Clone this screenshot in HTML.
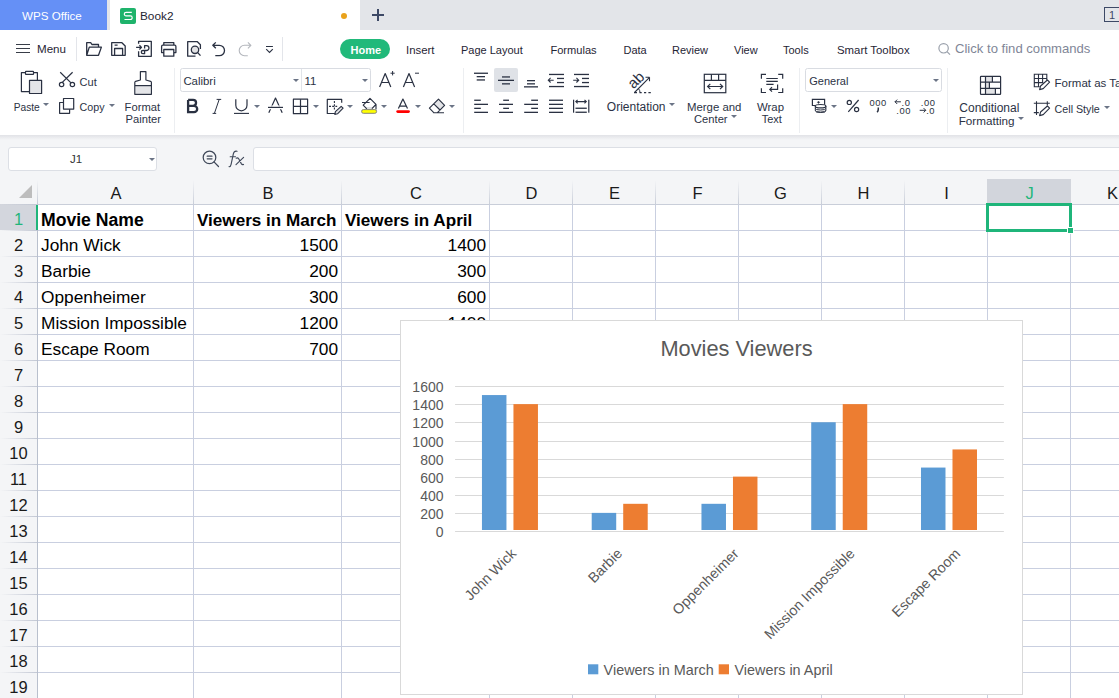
<!DOCTYPE html>
<html><head><meta charset="utf-8">
<style>
*{margin:0;padding:0;box-sizing:border-box}
html,body{width:1119px;height:698px;overflow:hidden;background:#fff;font-family:"Liberation Sans",sans-serif;position:relative}
.a{position:absolute;white-space:nowrap}
.t{position:absolute;white-space:nowrap;color:#2b3445;font-size:12px;line-height:14px}
svg{position:absolute;overflow:visible}
.ic{fill:none;stroke:#2f3a4c;stroke-width:1.2}
.dd{position:absolute;width:0;height:0;border-left:3px solid transparent;border-right:3px solid transparent;border-top:3.5px solid #6b7486}
.sep{position:absolute;width:1px;background:#e3e5ea}
</style></head><body>

<!-- ===== TAB BAR ===== -->
<div class="a" style="left:0;top:0;width:1119px;height:30px;background:#e3e5e9"></div>
<div class="a" style="left:0;top:0;width:107px;height:30px;background:#6590f6"></div>
<div class="t" style="left:22px;top:9px;color:#fff;font-size:11.6px">WPS Office</div>
<div class="a" style="left:110px;top:0;width:250px;height:30px;background:#fff"></div>
<div class="a" style="left:120px;top:8px;width:16px;height:16px;background:#1eb36b;border-radius:2px"></div>
<svg style="left:0;top:0" width="1" height="1"><path d="M131.8 12.3h-5.7a1.8 1.8 0 0 0 0 3.6h4.3a1.8 1.8 0 0 1 0 3.6h-5.9" fill="none" stroke="#fff" stroke-width="1.15"/></svg>
<div class="t" style="left:140px;top:9px;color:#1f2533;font-size:11.8px">Book2</div>
<div class="a" style="left:341px;top:13px;width:6px;height:6px;border-radius:50%;background:#e9a21b"></div>
<div class="a" style="left:372px;top:14px;width:12px;height:2px;background:#3d4966"></div>
<div class="a" style="left:377px;top:9px;width:2px;height:12px;background:#3d4966"></div>
<div class="a" style="left:1104px;top:7px;width:20px;height:15px;border:1.5px solid #3d4966"></div>
<div class="t" style="left:1109px;top:8px;font-size:11px;color:#3d4966">1</div>

<!-- ===== TOOLBAR ROW ===== -->
<svg style="left:0;top:0" width="1119" height="68">
<g fill="none" stroke="#2a3142" stroke-width="1.3">
<path d="M16 44.5h14M16 48.5h14M16 52.5h14" stroke-width="1.05" stroke="#383d48"/>
<!-- folder -->
<path d="M86.7 55.3V42.7h4l1.2 1.8h6.6v2.6M86.7 55.3l2.6-8.2h12.1l-2.9 8.2z" stroke-linejoin="round"/>
<!-- save -->
<path d="M111.7 42.7h10.2l3.3 3.3v9.3h-13.5z M114.6 55.3v-6.8h8v6.8 M114.6 45.2h3" stroke-linejoin="round"/>
<!-- export -->
<path d="M138.6 43.7v-2.4h12.7v15h-12.7v-5.1 M136.1 47.4h5.4 M139.4 45.3l2.1 2.1l-2.1 2.1 M144.6 48.6v-3h1.9a2.45 2.45 0 0 1 0 4.9h-3.6a1.6 1.6 0 0 0 0 3.2h1.7v-3" stroke-linejoin="round"/>
<!-- print -->
<path d="M163.8 45.2v-2.6h10v2.6 M163.8 52.6h-2.2v-6.2a1.2 1.2 0 0 1 1.2-1.2h11.9a1.2 1.2 0 0 1 1.2 1.2v6.2h-2.2 M163.8 49.5h10v6.7h-10z" stroke-linejoin="round"/>
<!-- preview -->
<path d="M195.5 56.2h-7.8v-14.5h9.7l3 3v4.4" stroke-linejoin="round"/>
<circle cx="195" cy="49.8" r="3.7" fill="#e3e3e5"/>
<path d="M197.7 52.6l2.8 3"/>
<!-- undo -->
<path d="M215.8 42.4l-3 2.9l3 3 M212.8 45.3h6.5a5.2 5.2 0 0 1 0 10.4h-4" stroke-linejoin="round"/>
</g>
<g fill="none" stroke="#b4b7bd" stroke-width="1.1">
<path d="M247.9 42.4l3 2.9l-3 3 M250.9 45.3h-6.5a5.2 5.2 0 0 0 0 10.4h3.4" stroke-linejoin="round"/>
</g>
<g fill="none" stroke="#2a3142" stroke-width="1.1">
<path d="M266 46.5h6.9 M266.2 49.2l3.3 3.3l3.3-3.3"/>
</g>
</svg>
<div class="sep" style="left:76px;top:37px;height:24px"></div>
<div class="sep" style="left:282px;top:37px;height:24px"></div>
<div class="t" style="left:37px;top:42px;font-size:11.6px;color:#1f2535">Menu</div>
<div class="a" style="left:340px;top:39px;width:50px;height:20px;border-radius:10px;background:#21b97a"></div>
<div class="t" style="left:350.5px;top:43px;font-size:11px;font-weight:bold;color:#fff">Home</div>
<div class="t" style="left:406px;top:43px;font-size:11.4px;color:#1f2535">Insert</div>
<div class="t" style="left:461px;top:43px;font-size:11px;color:#1f2535">Page Layout</div>
<div class="t" style="left:550.4px;top:43px;font-size:11.1px;color:#1f2535">Formulas</div>
<div class="t" style="left:623.5px;top:43px;font-size:11px;color:#1f2535">Data</div>
<div class="t" style="left:672px;top:43px;font-size:11px;color:#1f2535">Review</div>
<div class="t" style="left:734px;top:43px;font-size:11px;color:#1f2535">View</div>
<div class="t" style="left:783px;top:43px;font-size:11px;color:#1f2535">Tools</div>
<div class="t" style="left:837px;top:43px;font-size:11.4px;color:#1f2535">Smart Toolbox</div>
<svg style="left:0;top:0" width="1" height="1"><g fill="none" stroke="#9aa0ab" stroke-width="1.2"><circle cx="943.6" cy="48.3" r="4.7"/><path d="M947 51.7l3 3"/></g></svg>
<div class="t" style="left:955px;top:41px;font-size:13.1px;line-height:15px;color:#7f8697">Click to find commands</div>
<div class="a" style="left:0;top:67px;width:1119px;height:1px;background:#fff"></div>


<!-- ===== RIBBON ===== -->
<svg style="left:0;top:0" width="1119" height="135">
<g fill="none" stroke="#2a3142" stroke-width="1.2" stroke-linejoin="round">
<!-- paste -->
<path d="M29.4 91.6h-8v-19h16v7.6"/>
<rect x="25.5" y="71.4" width="8" height="3" rx="0.5" fill="#fff"/>
<rect x="29.5" y="80.3" width="12.1" height="13.2" fill="#e4e5e8"/>
<!-- scissors -->
<path d="M60.2 72.3l10.8 10.6 M72.6 72.3l-10.8 10.6"/>
<circle cx="61.6" cy="84.5" r="2.2" fill="#fff"/><circle cx="72.4" cy="84.5" r="2.2" fill="#fff"/>
<!-- copy -->
<path d="M63.4 102.5h-3.8v10.8h10v-4"/>
<rect x="63.5" y="98.5" width="10.2" height="10.6"/>
<!-- format painter -->
<rect x="135.8" y="86.3" width="14.6" height="7.3" fill="#e4e5e8" stroke="none"/>
<path d="M140.4 80V71.6H145.9V80L150.6 81.3Q151.4 81.6 151.4 82.5V94.3H134.8V82.5Q134.8 81.6 135.6 81.3Z M134.8 85.7H151.4"/>
<!-- font box -->
</g>
<rect x="180.5" y="68.5" width="190" height="23" rx="2" fill="#fff" stroke="#d9dce2"/>
<path d="M301.5 69v22" stroke="#e1e4e9"/>
<g fill="none" stroke="#2a3142" stroke-width="1.2" stroke-linejoin="round">
<!-- A+ A- -->
<path d="M379.6 87l5.6-13.4l5.6 13.4 M381.6 82.5h7.2"/>
<path d="M390.5 73.2h4.2 M392.6 71v4.4" stroke-width="1"/>
<path d="M403.4 87l5.6-13.4l5.6 13.4 M405.4 82.5h7.2"/>
<path d="M415 73.2h4" stroke-width="1"/>
<!-- italic -->
<path d="M219.2 99.4l-4.8 14 M216.6 99.4h4.6 M212.6 113.4h3.6" stroke-width="1"/>
<!-- underline -->
<path d="M235.8 99.2v6a5.6 5.6 0 0 0 11.2 0v-6"/><path d="M234 113.4h15" stroke-width="1.1"/>
<!-- strike A -->
<path d="M268.8 112.8l6.7-14.8l6.7 14.8"/><path d="M266 106.2h20 M266 108.6h20" stroke="#fff" stroke-width="1.2"/><path d="M268 107.4h15"/>
<!-- border -->
<rect x="293.4" y="99.2" width="14.2" height="14.5"/><path d="M300.5 99.2v14.5 M293.4 106.4h14.2"/>
<!-- cell format -->
<path d="M335.5 113.5h-8.2v-14.1h14.4v3.4" />
<path d="M329 106.4h8.2 M334.4 101v8.4" stroke-dasharray="2 1.2" stroke-width="1.1"/>
<path d="M341.2 106.3l1.9 1.9l-5.6 5.6l-2.7 0.6l0.6-2.7z" fill="#e4e5e8" stroke-width="1.1"/>
<!-- fill -->
<path d="M365.3 107h8.8l-2 2.2h-4.8z" fill="#dfe0e3" stroke="none"/>
<path d="M366.8 108.8l-3.6-3.7l6.8-6.8l6 6v5.2 M375.9 104.5l-4 4.1 M362 102.5h7.6" stroke-width="1.15"/>
<rect x="361.6" y="109.6" width="15" height="3.7" rx="1.8" fill="#ffff00" stroke="#86867a" stroke-width="1"/>
<!-- font color -->
<path d="M398.4 108.5l4.5-9.5l4.6 9.5 M399.6 106.2h6.6"/>
<!-- eraser -->
<path d="M433.8 103.8l4.7-4.6l6.1 6.2l-4.6 4.6z" fill="#e4e5e8" stroke="none"/>
<path d="M429.4 108.2l9.1-9l6.1 6.2l-7.4 7.4h-3.2z M433.8 103.8l6.2 6.2 M433.3 112.7h10.7" stroke-width="1.15"/>
</g>
<rect x="396.3" y="110.2" width="13.6" height="2.8" rx="1.4" fill="#f00"/>
<!-- bold B -->
<path d="M188.1 99.9V112.2h5.9a3.2 3.2 0 0 0 0-6.4H188.1 M188.1 105.8h5a2.95 2.95 0 0 0 0-5.9H188.1" fill="none" stroke="#2a3142" stroke-width="2.3"/>
<!-- alignment -->
<rect x="494" y="68" width="24" height="24" rx="2" fill="#dfe2e7"/>
<g fill="#2a3142">
<rect x="474" y="72.6" width="14" height="1.3"/><rect x="476.7" y="76" width="8.3" height="1.3"/><rect x="476.7" y="79.3" width="8.3" height="1.3"/>
<rect x="502" y="76.3" width="8" height="1.3"/><rect x="498" y="79.7" width="16" height="1.3"/><rect x="502" y="83.2" width="8" height="1.3"/>
<rect x="527" y="80" width="8" height="1.3"/><rect x="527" y="83.2" width="8" height="1.3"/><rect x="524" y="86.2" width="14" height="1.3"/>
<rect x="549" y="73.8" width="15" height="1.3"/><rect x="557" y="77.8" width="7" height="1.3"/><rect x="557" y="81.9" width="7" height="1.3"/><rect x="549" y="85.9" width="15" height="1.3"/>
<rect x="574" y="73.8" width="15" height="1.3"/><rect x="582" y="77.8" width="7" height="1.3"/><rect x="582" y="81.9" width="7" height="1.3"/><rect x="574" y="85.9" width="15" height="1.3"/>
<!-- bottom row -->
<rect x="474.2" y="99.6" width="6.6" height="1.3"/><rect x="474.2" y="103.7" width="13.8" height="1.3"/><rect x="474.2" y="107.7" width="6.6" height="1.3"/><rect x="474.2" y="111.7" width="13.8" height="1.3"/>
<rect x="503.2" y="99.6" width="5.8" height="1.3"/><rect x="499" y="103.7" width="14" height="1.3"/><rect x="503.2" y="107.7" width="5.8" height="1.3"/><rect x="499" y="111.7" width="14" height="1.3"/>
<rect x="531.2" y="99.6" width="6.8" height="1.3"/><rect x="524.2" y="103.7" width="13.8" height="1.3"/><rect x="531.2" y="107.7" width="6.8" height="1.3"/><rect x="524.2" y="111.7" width="13.8" height="1.3"/>
<rect x="549" y="99.6" width="14" height="1.3"/><rect x="549" y="103.7" width="14" height="1.3"/><rect x="549" y="107.7" width="14" height="1.3"/><rect x="549" y="111.7" width="14" height="1.3"/>
<rect x="573" y="99.7" width="1.2" height="13"/><rect x="588.2" y="99.7" width="1.2" height="13"/><rect x="575.5" y="107.6" width="11.3" height="1.3"/><rect x="575.5" y="111.6" width="11.3" height="1.3"/>
</g>
<g fill="none" stroke="#2a3142" stroke-width="1.1">
<path d="M550.6 77.9l-2.3 2.3l2.3 2.3 M548.4 80.2h5.3"/>
<path d="M576.4 77.9l2.3 2.3l-2.3 2.3 M573.2 80.2h5.5"/>
<path d="M575.8 101.6h10.5 M577.6 99.8l-1.8 1.8l1.8 1.8 M584.5 99.8l1.8 1.8l-1.8 1.8"/>
</g>
<!-- orientation -->
<g fill="none" stroke="#2a3142" stroke-width="1.1">
<path d="M634.5 92.5l14.8-14.8 M649.5 77.3v4 M649.5 77.3h-4"/>
<path d="M634 92.7h3M639.5 92.7h2.2M644 92.7h2.2M648.4 92.7h2.4" stroke-width="1.2"/>
<path d="M638.4 88.6A5.5 5.5 0 0 1 640 92.5" stroke-width="1"/>
</g>
<text transform="translate(633.6,89.6) rotate(-45)" font-family="Liberation Sans" font-size="15" fill="#2a3142">ab</text>
<!-- merge -->
<g fill="none" stroke="#2a3142" stroke-width="1.2">
<rect x="704.3" y="74.3" width="21.5" height="18.4"/>
<path d="M704.3 80.3h21.5 M711.4 74.3v6 M718.6 74.3v6 M707.6 86.5h15 M710.3 83.8l-2.7 2.7l2.7 2.7 M720 83.8l2.7 2.7l-2.7 2.7"/>
</g>
<!-- wrap -->
<g fill="none" stroke="#2a3142" stroke-width="1.2">
<path d="M766 74.3h-4.6v4.4 M761.4 88.2v4.3h4.6 M778.2 74.3h4.5v4.4 M782.7 88.2v4.3h-4.5"/>
<path d="M766.3 78.5h11.5 M766.3 81.4h11.5 M766.3 84.4h7.3 M777.6 84.4v5h-7.8 M772 87.2l-2.2 2.2l2.2 2.2"/>
</g>
<!-- general box -->
<rect x="805.5" y="68.5" width="136" height="23" rx="2" fill="#fff" stroke="#d9dce2"/>
<!-- currency -->
<g fill="none" stroke="#2a3142" stroke-width="1.2">
<path d="M815 105.5h-2.6v-6.1h12.2v5.4"/>
<path d="M818.5 101.2l1.1 1.1l-1.1 1.1l-1.1-1.1z" fill="#2a3142" stroke-width="0.6"/>
<ellipse cx="820.6" cy="106.2" rx="5.3" ry="1.7" fill="#fff"/>
<path d="M815.3 106.2v4.6a5.3 1.7 0 0 0 10.6 0v-4.6 M815.3 108.4a5.3 1.6 0 0 0 10.6 0 M815.3 110.5a5.3 1.6 0 0 0 10.6 0" stroke-width="1"/>
</g>
<!-- percent -->
<g fill="none" stroke="#2a3142" stroke-width="1.2">
<circle cx="849.3" cy="102.4" r="2.1"/><circle cx="856.6" cy="109.5" r="2.1"/><path d="M858.6 100l-10.3 11.8"/>
</g>
<text x="869.6" y="105.6" font-family="Liberation Sans" font-size="9.4" letter-spacing="0.45" fill="#2a3142">000</text>
<path d="M878.3 107.6v1.6q0 1.8-1.2 3" fill="none" stroke="#2a3142" stroke-width="1.5"/>
<text x="901.6" y="105.6" font-family="Liberation Sans" font-size="9.4" letter-spacing="0.55" fill="#2a3142">.0</text>
<text x="896.3" y="113.8" font-family="Liberation Sans" font-size="9.4" letter-spacing="0.55" fill="#2a3142">.00</text>
<text x="920.8" y="105.6" font-family="Liberation Sans" font-size="9.4" letter-spacing="0.55" fill="#2a3142">.00</text>
<text x="926.2" y="113.8" font-family="Liberation Sans" font-size="9.4" letter-spacing="0.55" fill="#2a3142">.0</text>
<g fill="none" stroke="#2a3142" stroke-width="1">
<path d="M894.9 101.8h6 M897.2 99.6l-2.2 2.2l2.2 2.2 M919.7 110.3h6 M923.6 108.1l2.2 2.2l-2.2 2.2"/>
</g>
<!-- conditional formatting -->
<g fill="none" stroke="#2a3142" stroke-width="1.2">
<rect x="985.5" y="76.4" width="6.9" height="5.8" fill="#e2e3e6" stroke="none"/>
<rect x="985.5" y="82.2" width="3.9" height="6.1" fill="#e2e3e6" stroke="none"/>
<rect x="985.5" y="88.3" width="9.9" height="6" fill="#e2e3e6" stroke="none"/>
<rect x="980.5" y="76.4" width="20.1" height="17.9" rx="0.6"/>
<path d="M980.5 82.2h20.1 M980.5 88.3h20.1 M985.5 76.4v17.9 M992.4 76.4v5.8 M989.4 82.2v6.1 M995.4 88.3v6"/>
</g>
<!-- format as table -->
<g fill="none" stroke="#2a3142" stroke-width="1.1">
<path d="M1046.8 80v-5.7h-12.5v12.5h5.5 M1034.3 78.5h12.5 M1034.3 82.6h9 M1038.5 74.3v12.5 M1042.6 74.3v9"/>
<path d="M1047.4 80l2.2 2.2l-6.4 6.4l-3.6 1l1-3.6z" stroke-linejoin="round"/>
<!-- cell style -->
<path d="M1033.8 103.3h16 M1036.5 101.2v13.8 M1047.3 101.2v4.2 M1033.8 112.6h5"/>
<path d="M1047.4 106l2.2 2.2l-6.4 6.4l-3.6 1l1-3.6z" stroke-linejoin="round"/>
</g>
</svg>
<div class="sep" style="left:174px;top:68px;height:65px;background:#eceef1"></div>
<div class="sep" style="left:463px;top:68px;height:65px;background:#eceef1"></div>
<div class="sep" style="left:799px;top:68px;height:65px;background:#eceef1"></div>
<div class="sep" style="left:947px;top:68px;height:65px;background:#eceef1"></div>

<div class="t" style="left:13.7px;top:101px;font-size:10.2px;color:#2b3245">Paste</div>
<div class="dd" style="left:42.5px;top:102.8px"></div>
<div class="t" style="left:79.6px;top:75px;font-size:11px;color:#2b3245">Cut</div>
<div class="t" style="left:79.6px;top:100px;font-size:10.7px;color:#2b3245">Copy</div>
<div class="dd" style="left:109px;top:103.5px"></div>
<div class="t" style="left:124.6px;top:99.5px;font-size:11.2px;color:#2b3245">Format</div>
<div class="t" style="left:125.5px;top:112px;font-size:11.2px;color:#2b3245">Painter</div>
<div class="t" style="left:183.4px;top:74px;font-size:11.4px;color:#2b3245">Calibri</div>
<div class="dd" style="left:293px;top:79px"></div>
<div class="t" style="left:304.6px;top:74px;font-size:11.4px;color:#2b3245">11</div>
<div class="dd" style="left:362px;top:79px"></div>
<div class="dd" style="left:254px;top:105px"></div>
<div class="dd" style="left:312.5px;top:105px"></div>
<div class="dd" style="left:347px;top:105px"></div>
<div class="dd" style="left:380.8px;top:105px"></div>
<div class="dd" style="left:414.8px;top:105px"></div>
<div class="dd" style="left:448.8px;top:105px"></div>
<div class="t" style="left:606.8px;top:100px;font-size:12px;color:#2b3245">Orientation</div>
<div class="dd" style="left:668.8px;top:103px"></div>
<div class="t" style="left:687px;top:99.5px;font-size:11.4px;color:#2b3245">Merge and</div>
<div class="t" style="left:694px;top:112px;font-size:11.2px;color:#2b3245">Center</div>
<div class="dd" style="left:731px;top:115px"></div>
<div class="t" style="left:757px;top:99.5px;font-size:11.4px;color:#2b3245">Wrap</div>
<div class="t" style="left:761.7px;top:112px;font-size:11px;color:#2b3245">Text</div>
<div class="t" style="left:809.3px;top:74px;font-size:11px;color:#2b3245">General</div>
<div class="dd" style="left:933px;top:79px"></div>
<div class="dd" style="left:831px;top:105px"></div>
<div class="t" style="left:959.3px;top:101px;font-size:12px;color:#2b3245">Conditional</div>
<div class="t" style="left:958.7px;top:114px;font-size:11.7px;color:#2b3245">Formatting</div>
<div class="dd" style="left:1018px;top:117px"></div>
<div class="t" style="left:1054.6px;top:76px;font-size:11.5px;color:#2b3245">Format as Table</div>
<div class="t" style="left:1054.6px;top:102px;font-size:10.7px;color:#2b3245">Cell Style</div>
<div class="dd" style="left:1104px;top:106px"></div>


<!-- ===== FORMULA BAR ===== -->
<div class="a" style="left:0;top:135px;width:1119px;height:563px;background:#f4f5f7"></div>
<div class="a" style="left:0;top:135px;width:1119px;height:5px;background:linear-gradient(#e1e2e6,#f4f5f7)"></div>
<div class="a" style="left:8px;top:147px;width:149px;height:24px;background:#fff;border:1px solid #dcdfe5;border-radius:3px"></div>
<div class="t" style="left:70px;top:152px;font-size:11.5px;color:#333">J1</div>
<div class="dd" style="left:149px;top:158px"></div>
<div class="a" style="left:253px;top:147px;width:880px;height:24px;background:#fff;border:1px solid #dcdfe5;border-radius:3px"></div>
<svg style="left:0;top:0" width="1" height="1"><g fill="none" stroke="#3f4859" stroke-width="1.25" stroke-linecap="round"><circle cx="209.5" cy="157.4" r="6.3"/><path d="M214 161.9l4.5 4.6 M207.2 156.2h4.8 M207.2 158.8h4.8"/>
<path d="M237 151.3q-2.8-0.6-3.6 2.4l-2.3 10.6q-0.6 2.6-2 2.4 M230.2 156.7h5.3" stroke-width="1.15"/>
<path d="M236.2 158.2q1.5-0.9 2.5 0.6l2.6 4.8q0.9 1.4 2.2 0.8 M243.6 157.4l-7.6 7.3" stroke-width="1.15"/></g></svg>

<!-- ===== GRID ===== -->
<div class="a" style="left:38px;top:205px;width:1081px;height:493px;background:#fff"></div>
<div class="a" style="left:0;top:204px;width:37px;height:26px;background:#d3d6dd"></div>
<div class="a" style="left:193px;top:205px;width:1px;height:493px;background:#c9cfe0"></div>
<div class="a" style="left:193px;top:180px;width:1px;height:24px;background:linear-gradient(#f4f5f7,#c9ced9)"></div>
<div class="a" style="left:341px;top:205px;width:1px;height:493px;background:#c9cfe0"></div>
<div class="a" style="left:341px;top:180px;width:1px;height:24px;background:linear-gradient(#f4f5f7,#c9ced9)"></div>
<div class="a" style="left:489px;top:205px;width:1px;height:493px;background:#c9cfe0"></div>
<div class="a" style="left:489px;top:180px;width:1px;height:24px;background:linear-gradient(#f4f5f7,#c9ced9)"></div>
<div class="a" style="left:572px;top:205px;width:1px;height:493px;background:#c9cfe0"></div>
<div class="a" style="left:572px;top:180px;width:1px;height:24px;background:linear-gradient(#f4f5f7,#c9ced9)"></div>
<div class="a" style="left:655px;top:205px;width:1px;height:493px;background:#c9cfe0"></div>
<div class="a" style="left:655px;top:180px;width:1px;height:24px;background:linear-gradient(#f4f5f7,#c9ced9)"></div>
<div class="a" style="left:738px;top:205px;width:1px;height:493px;background:#c9cfe0"></div>
<div class="a" style="left:738px;top:180px;width:1px;height:24px;background:linear-gradient(#f4f5f7,#c9ced9)"></div>
<div class="a" style="left:821px;top:205px;width:1px;height:493px;background:#c9cfe0"></div>
<div class="a" style="left:821px;top:180px;width:1px;height:24px;background:linear-gradient(#f4f5f7,#c9ced9)"></div>
<div class="a" style="left:904px;top:205px;width:1px;height:493px;background:#c9cfe0"></div>
<div class="a" style="left:904px;top:180px;width:1px;height:24px;background:linear-gradient(#f4f5f7,#c9ced9)"></div>
<div class="a" style="left:987px;top:205px;width:1px;height:493px;background:#c9cfe0"></div>
<div class="a" style="left:987px;top:180px;width:1px;height:24px;background:linear-gradient(#f4f5f7,#c9ced9)"></div>
<div class="a" style="left:1070px;top:205px;width:1px;height:493px;background:#c9cfe0"></div>
<div class="a" style="left:1070px;top:180px;width:1px;height:24px;background:linear-gradient(#f4f5f7,#c9ced9)"></div>
<div class="a" style="left:1153px;top:205px;width:1px;height:493px;background:#c9cfe0"></div>
<div class="a" style="left:1153px;top:180px;width:1px;height:24px;background:linear-gradient(#f4f5f7,#c9ced9)"></div>
<div class="a" style="left:38px;top:204px;width:1081px;height:1px;background:#c9cfe0"></div>
<div class="a" style="left:0;top:204px;width:37px;height:1px;background:linear-gradient(90deg,rgba(197,202,214,0),#c3c8d4)"></div>
<div class="a" style="left:38px;top:230px;width:1081px;height:1px;background:#c9cfe0"></div>
<div class="a" style="left:0;top:230px;width:37px;height:1px;background:linear-gradient(90deg,rgba(197,202,214,0),#c3c8d4)"></div>
<div class="a" style="left:38px;top:256px;width:1081px;height:1px;background:#c9cfe0"></div>
<div class="a" style="left:0;top:256px;width:37px;height:1px;background:linear-gradient(90deg,rgba(197,202,214,0),#c3c8d4)"></div>
<div class="a" style="left:38px;top:282px;width:1081px;height:1px;background:#c9cfe0"></div>
<div class="a" style="left:0;top:282px;width:37px;height:1px;background:linear-gradient(90deg,rgba(197,202,214,0),#c3c8d4)"></div>
<div class="a" style="left:38px;top:308px;width:1081px;height:1px;background:#c9cfe0"></div>
<div class="a" style="left:0;top:308px;width:37px;height:1px;background:linear-gradient(90deg,rgba(197,202,214,0),#c3c8d4)"></div>
<div class="a" style="left:38px;top:334px;width:1081px;height:1px;background:#c9cfe0"></div>
<div class="a" style="left:0;top:334px;width:37px;height:1px;background:linear-gradient(90deg,rgba(197,202,214,0),#c3c8d4)"></div>
<div class="a" style="left:38px;top:360px;width:1081px;height:1px;background:#c9cfe0"></div>
<div class="a" style="left:0;top:360px;width:37px;height:1px;background:linear-gradient(90deg,rgba(197,202,214,0),#c3c8d4)"></div>
<div class="a" style="left:38px;top:386px;width:1081px;height:1px;background:#c9cfe0"></div>
<div class="a" style="left:0;top:386px;width:37px;height:1px;background:linear-gradient(90deg,rgba(197,202,214,0),#c3c8d4)"></div>
<div class="a" style="left:38px;top:412px;width:1081px;height:1px;background:#c9cfe0"></div>
<div class="a" style="left:0;top:412px;width:37px;height:1px;background:linear-gradient(90deg,rgba(197,202,214,0),#c3c8d4)"></div>
<div class="a" style="left:38px;top:438px;width:1081px;height:1px;background:#c9cfe0"></div>
<div class="a" style="left:0;top:438px;width:37px;height:1px;background:linear-gradient(90deg,rgba(197,202,214,0),#c3c8d4)"></div>
<div class="a" style="left:38px;top:464px;width:1081px;height:1px;background:#c9cfe0"></div>
<div class="a" style="left:0;top:464px;width:37px;height:1px;background:linear-gradient(90deg,rgba(197,202,214,0),#c3c8d4)"></div>
<div class="a" style="left:38px;top:490px;width:1081px;height:1px;background:#c9cfe0"></div>
<div class="a" style="left:0;top:490px;width:37px;height:1px;background:linear-gradient(90deg,rgba(197,202,214,0),#c3c8d4)"></div>
<div class="a" style="left:38px;top:516px;width:1081px;height:1px;background:#c9cfe0"></div>
<div class="a" style="left:0;top:516px;width:37px;height:1px;background:linear-gradient(90deg,rgba(197,202,214,0),#c3c8d4)"></div>
<div class="a" style="left:38px;top:542px;width:1081px;height:1px;background:#c9cfe0"></div>
<div class="a" style="left:0;top:542px;width:37px;height:1px;background:linear-gradient(90deg,rgba(197,202,214,0),#c3c8d4)"></div>
<div class="a" style="left:38px;top:568px;width:1081px;height:1px;background:#c9cfe0"></div>
<div class="a" style="left:0;top:568px;width:37px;height:1px;background:linear-gradient(90deg,rgba(197,202,214,0),#c3c8d4)"></div>
<div class="a" style="left:38px;top:594px;width:1081px;height:1px;background:#c9cfe0"></div>
<div class="a" style="left:0;top:594px;width:37px;height:1px;background:linear-gradient(90deg,rgba(197,202,214,0),#c3c8d4)"></div>
<div class="a" style="left:38px;top:620px;width:1081px;height:1px;background:#c9cfe0"></div>
<div class="a" style="left:0;top:620px;width:37px;height:1px;background:linear-gradient(90deg,rgba(197,202,214,0),#c3c8d4)"></div>
<div class="a" style="left:38px;top:646px;width:1081px;height:1px;background:#c9cfe0"></div>
<div class="a" style="left:0;top:646px;width:37px;height:1px;background:linear-gradient(90deg,rgba(197,202,214,0),#c3c8d4)"></div>
<div class="a" style="left:38px;top:672px;width:1081px;height:1px;background:#c9cfe0"></div>
<div class="a" style="left:0;top:672px;width:37px;height:1px;background:linear-gradient(90deg,rgba(197,202,214,0),#c3c8d4)"></div>
<div class="a" style="left:38px;top:698px;width:1081px;height:1px;background:#c9cfe0"></div>
<div class="a" style="left:0;top:698px;width:37px;height:1px;background:linear-gradient(90deg,rgba(197,202,214,0),#c3c8d4)"></div>
<div class="a" style="left:38px;top:204px;width:1081px;height:1px;background:#c9ced9"></div>
<div class="a" style="left:37px;top:180px;width:1px;height:518px;background:linear-gradient(#f4f5f7,#b9c0cd 30px)"></div>
<div class="a" style="left:987px;top:179px;width:84px;height:25px;background:#d2d5dc"></div>
<svg style="left:0;top:0" width="1" height="1"><polygon points="19,198 32,198 32,185" fill="#bdbdbd"/></svg>
<div class="t" style="left:38px;width:156px;top:184px;text-align:center;font-size:16.5px;line-height:19px;color:#1a1a1a">A</div>
<div class="t" style="left:194px;width:148px;top:184px;text-align:center;font-size:16.5px;line-height:19px;color:#1a1a1a">B</div>
<div class="t" style="left:342px;width:148px;top:184px;text-align:center;font-size:16.5px;line-height:19px;color:#1a1a1a">C</div>
<div class="t" style="left:490px;width:83px;top:184px;text-align:center;font-size:16.5px;line-height:19px;color:#1a1a1a">D</div>
<div class="t" style="left:573px;width:83px;top:184px;text-align:center;font-size:16.5px;line-height:19px;color:#1a1a1a">E</div>
<div class="t" style="left:656px;width:83px;top:184px;text-align:center;font-size:16.5px;line-height:19px;color:#1a1a1a">F</div>
<div class="t" style="left:739px;width:83px;top:184px;text-align:center;font-size:16.5px;line-height:19px;color:#1a1a1a">G</div>
<div class="t" style="left:822px;width:83px;top:184px;text-align:center;font-size:16.5px;line-height:19px;color:#1a1a1a">H</div>
<div class="t" style="left:905px;width:83px;top:184px;text-align:center;font-size:16.5px;line-height:19px;color:#1a1a1a">I</div>
<div class="t" style="left:988px;width:83px;top:184px;text-align:center;font-size:16.5px;line-height:19px;color:#1fb57a">J</div>
<div class="t" style="left:1071px;width:83px;top:184px;text-align:center;font-size:16.5px;line-height:19px;color:#1a1a1a">K</div>
<div class="t" style="left:0;width:37px;top:210px;text-align:center;font-size:16.5px;line-height:19px;color:#1fb57a">1</div>
<div class="t" style="left:0;width:37px;top:236px;text-align:center;font-size:16.5px;line-height:19px;color:#1a1a1a">2</div>
<div class="t" style="left:0;width:37px;top:262px;text-align:center;font-size:16.5px;line-height:19px;color:#1a1a1a">3</div>
<div class="t" style="left:0;width:37px;top:288px;text-align:center;font-size:16.5px;line-height:19px;color:#1a1a1a">4</div>
<div class="t" style="left:0;width:37px;top:314px;text-align:center;font-size:16.5px;line-height:19px;color:#1a1a1a">5</div>
<div class="t" style="left:0;width:37px;top:340px;text-align:center;font-size:16.5px;line-height:19px;color:#1a1a1a">6</div>
<div class="t" style="left:0;width:37px;top:366px;text-align:center;font-size:16.5px;line-height:19px;color:#1a1a1a">7</div>
<div class="t" style="left:0;width:37px;top:392px;text-align:center;font-size:16.5px;line-height:19px;color:#1a1a1a">8</div>
<div class="t" style="left:0;width:37px;top:418px;text-align:center;font-size:16.5px;line-height:19px;color:#1a1a1a">9</div>
<div class="t" style="left:0;width:37px;top:444px;text-align:center;font-size:16.5px;line-height:19px;color:#1a1a1a">10</div>
<div class="t" style="left:0;width:37px;top:470px;text-align:center;font-size:16.5px;line-height:19px;color:#1a1a1a">11</div>
<div class="t" style="left:0;width:37px;top:496px;text-align:center;font-size:16.5px;line-height:19px;color:#1a1a1a">12</div>
<div class="t" style="left:0;width:37px;top:522px;text-align:center;font-size:16.5px;line-height:19px;color:#1a1a1a">13</div>
<div class="t" style="left:0;width:37px;top:548px;text-align:center;font-size:16.5px;line-height:19px;color:#1a1a1a">14</div>
<div class="t" style="left:0;width:37px;top:574px;text-align:center;font-size:16.5px;line-height:19px;color:#1a1a1a">15</div>
<div class="t" style="left:0;width:37px;top:600px;text-align:center;font-size:16.5px;line-height:19px;color:#1a1a1a">16</div>
<div class="t" style="left:0;width:37px;top:626px;text-align:center;font-size:16.5px;line-height:19px;color:#1a1a1a">17</div>
<div class="t" style="left:0;width:37px;top:652px;text-align:center;font-size:16.5px;line-height:19px;color:#1a1a1a">18</div>
<div class="t" style="left:0;width:37px;top:678px;text-align:center;font-size:16.5px;line-height:19px;color:#1a1a1a">19</div>
<div class="a" style="left:36px;top:205px;width:2px;height:25px;background:#1fb57a"></div>
<div class="a" style="left:986px;top:203px;width:86px;height:29px;border:3px solid #1fb57a"></div>
<div class="a" style="left:1067px;top:227px;width:7px;height:7px;background:#fff"></div>
<div class="a" style="left:1068px;top:228px;width:5px;height:5px;background:#1fb57a"></div>
<div class="t" style="left:41px;top:211px;font-size:17.6px;line-height:19px;font-weight:bold;color:#000">Movie Name</div>
<div class="t" style="left:197px;top:211px;font-size:17.1px;line-height:19px;font-weight:bold;color:#000">Viewers in March</div>
<div class="t" style="left:345px;top:211px;font-size:17.1px;line-height:19px;font-weight:bold;color:#000">Viewers in April</div>
<div class="t" style="left:41px;top:236px;font-size:17.3px;line-height:19px;color:#000">John Wick</div>
<div class="t" style="right:781px;top:236px;font-size:17.3px;line-height:19px;color:#000">1500</div>
<div class="t" style="right:633px;top:236px;font-size:17.3px;line-height:19px;color:#000">1400</div>
<div class="t" style="left:41px;top:262px;font-size:17.3px;line-height:19px;color:#000">Barbie</div>
<div class="t" style="right:781px;top:262px;font-size:17.3px;line-height:19px;color:#000">200</div>
<div class="t" style="right:633px;top:262px;font-size:17.3px;line-height:19px;color:#000">300</div>
<div class="t" style="left:41px;top:288px;font-size:17.3px;line-height:19px;color:#000">Oppenheimer</div>
<div class="t" style="right:781px;top:288px;font-size:17.3px;line-height:19px;color:#000">300</div>
<div class="t" style="right:633px;top:288px;font-size:17.3px;line-height:19px;color:#000">600</div>
<div class="t" style="left:41px;top:314px;font-size:17.3px;line-height:19px;color:#000">Mission Impossible</div>
<div class="t" style="right:781px;top:314px;font-size:17.3px;line-height:19px;color:#000">1200</div>
<div class="t" style="right:633px;top:314px;font-size:17.3px;line-height:19px;color:#000">1400</div>
<div class="t" style="left:41px;top:340px;font-size:17.3px;line-height:19px;color:#000">Escape Room</div>
<div class="t" style="right:781px;top:340px;font-size:17.3px;line-height:19px;color:#000">700</div>
<div class="t" style="right:633px;top:340px;font-size:17.3px;line-height:19px;color:#000">900</div>

<!-- ===== CHART ===== -->
<div class="a" style="left:400px;top:320px;width:623px;height:375px;background:#fff;border:1px solid #d9d9d9"></div>
<svg style="left:0;top:0" width="1119" height="698" viewBox="0 0 1119 698">
<text x="736.5" y="356" text-anchor="middle" font-family="Liberation Sans" font-size="21.8" fill="#595959">Movies Viewers</text>
<rect x="455.07" y="531" width="548.8" height="1" fill="#d9d9d9"/>
<text x="443.5" y="536.50" text-anchor="end" font-family="Liberation Sans" font-size="14" fill="#595959">0</text>
<rect x="455.07" y="513" width="548.8" height="1" fill="#d9d9d9"/>
<text x="443.5" y="518.50" text-anchor="end" font-family="Liberation Sans" font-size="14" fill="#595959">200</text>
<rect x="455.07" y="495" width="548.8" height="1" fill="#d9d9d9"/>
<text x="443.5" y="500.50" text-anchor="end" font-family="Liberation Sans" font-size="14" fill="#595959">400</text>
<rect x="455.07" y="477" width="548.8" height="1" fill="#d9d9d9"/>
<text x="443.5" y="482.50" text-anchor="end" font-family="Liberation Sans" font-size="14" fill="#595959">600</text>
<rect x="455.07" y="459" width="548.8" height="1" fill="#d9d9d9"/>
<text x="443.5" y="464.50" text-anchor="end" font-family="Liberation Sans" font-size="14" fill="#595959">800</text>
<rect x="455.07" y="441" width="548.8" height="1" fill="#d9d9d9"/>
<text x="443.5" y="446.50" text-anchor="end" font-family="Liberation Sans" font-size="14" fill="#595959">1000</text>
<rect x="455.07" y="422" width="548.8" height="1" fill="#d9d9d9"/>
<text x="443.5" y="427.50" text-anchor="end" font-family="Liberation Sans" font-size="14" fill="#595959">1200</text>
<rect x="455.07" y="404" width="548.8" height="1" fill="#d9d9d9"/>
<text x="443.5" y="409.50" text-anchor="end" font-family="Liberation Sans" font-size="14" fill="#595959">1400</text>
<rect x="455.07" y="386" width="548.8" height="1" fill="#d9d9d9"/>
<text x="443.5" y="391.50" text-anchor="end" font-family="Liberation Sans" font-size="14" fill="#595959">1600</text>
<rect x="481.95" y="395.06" width="24.5" height="134.94" fill="#5b9bd5"/>
<rect x="513.45" y="404.12" width="24.5" height="125.88" fill="#ed7d31"/>
<text transform="translate(517.10,554.5) rotate(-45)" text-anchor="end" font-family="Liberation Sans" font-size="14.3" fill="#595959">John Wick</text>
<rect x="591.71" y="512.88" width="24.5" height="17.12" fill="#5b9bd5"/>
<rect x="623.21" y="503.81" width="24.5" height="26.19" fill="#ed7d31"/>
<text transform="translate(623.10,554.5) rotate(-45)" text-anchor="end" font-family="Liberation Sans" font-size="14.3" fill="#595959">Barbie</text>
<rect x="701.47" y="503.81" width="24.5" height="26.19" fill="#5b9bd5"/>
<rect x="732.97" y="476.62" width="24.5" height="53.38" fill="#ed7d31"/>
<text transform="translate(739.60,554.5) rotate(-45)" text-anchor="end" font-family="Liberation Sans" font-size="14.3" fill="#595959">Oppenheimer</text>
<rect x="811.23" y="422.25" width="24.5" height="107.75" fill="#5b9bd5"/>
<rect x="842.73" y="404.12" width="24.5" height="125.88" fill="#ed7d31"/>
<text transform="translate(855.60,554.5) rotate(-45)" text-anchor="end" font-family="Liberation Sans" font-size="14.3" fill="#595959">Mission Impossible</text>
<rect x="920.99" y="467.56" width="24.5" height="62.44" fill="#5b9bd5"/>
<rect x="952.49" y="449.44" width="24.5" height="80.56" fill="#ed7d31"/>
<text transform="translate(961.20,554.5) rotate(-45)" text-anchor="end" font-family="Liberation Sans" font-size="14.3" fill="#595959">Escape Room</text>
<rect x="588" y="664.3" width="10.3" height="10" fill="#5b9bd5"/>
<text x="603.6" y="675" font-family="Liberation Sans" font-size="14.4" fill="#595959">Viewers in March</text>
<rect x="718.7" y="664.3" width="10.3" height="10" fill="#ed7d31"/>
<text x="734.5" y="675" font-family="Liberation Sans" font-size="14.4" fill="#595959">Viewers in April</text>
</svg>

</body></html>
